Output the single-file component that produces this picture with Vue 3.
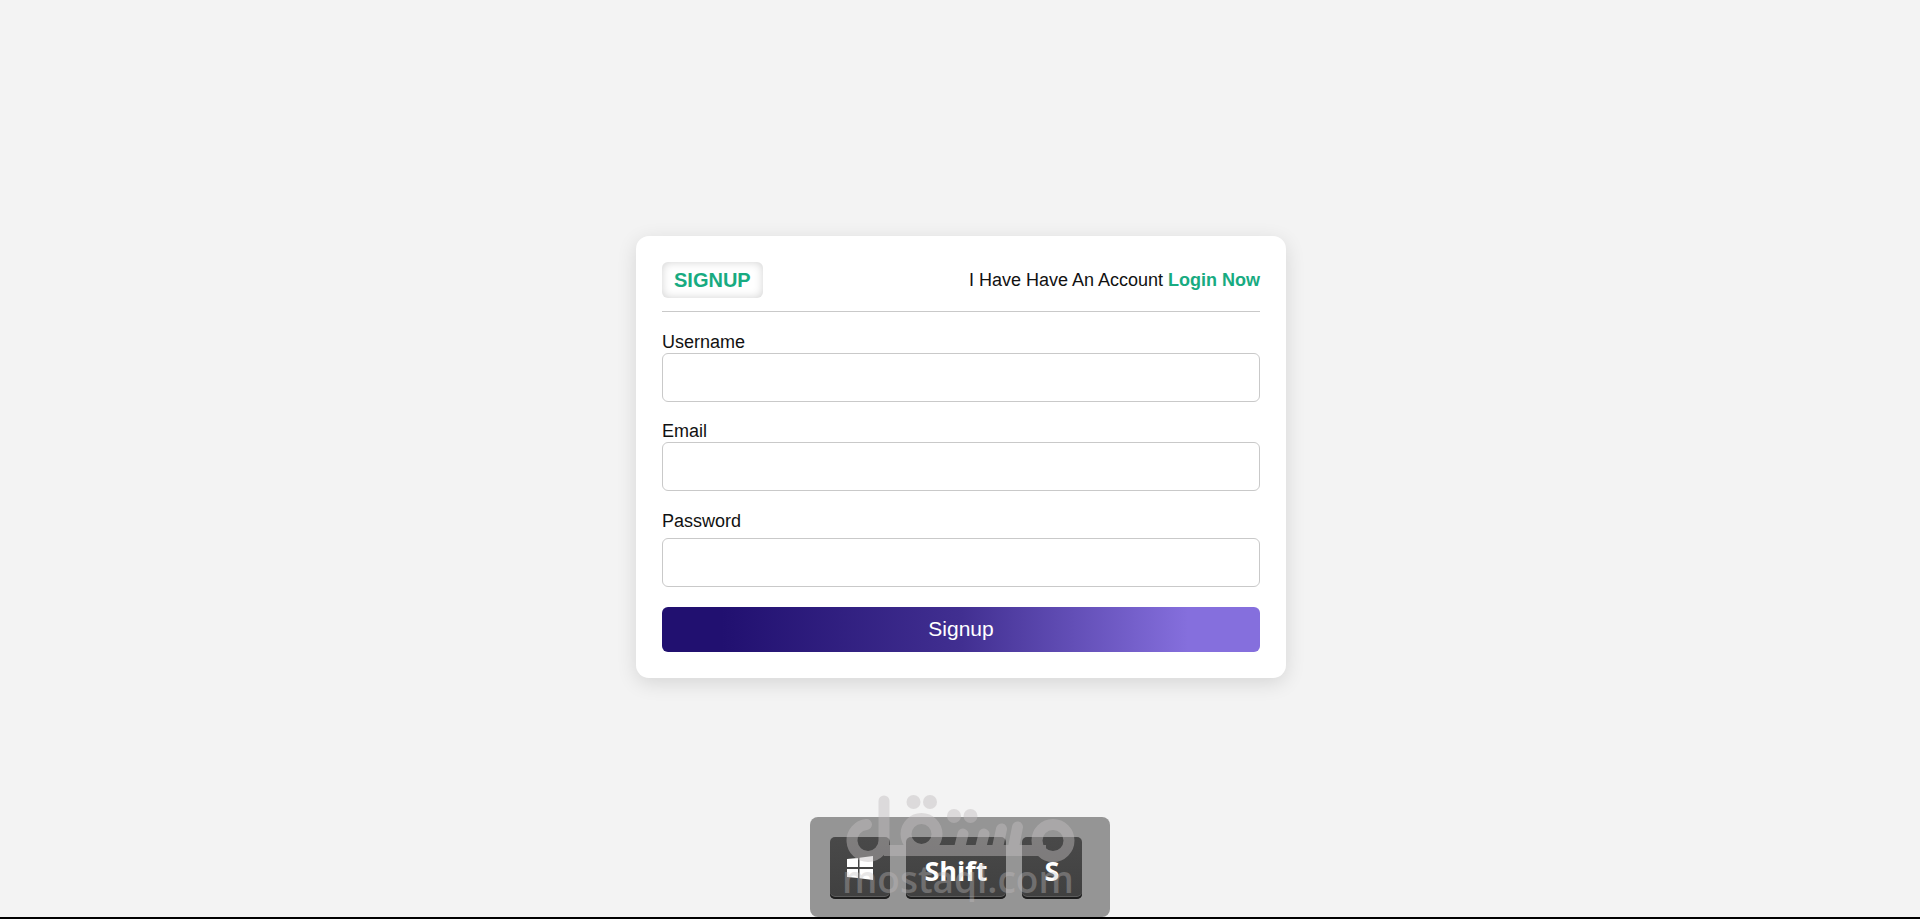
<script setup>
import { ref } from 'vue'

const username = ref('')
const email = ref('')
const password = ref('')
</script>

<template>
  <div class="page">
    <main class="stage">
      <form class="card" @submit.prevent>
        <header class="head">
          <h1 class="badge">SIGNUP</h1>
          <p class="switch">I Have Have An Account <a href="#login">Login Now</a></p>
        </header>
        <div class="field">
          <label for="username">Username</label>
          <input id="username" v-model="username" type="text" />
        </div>
        <div class="field">
          <label for="email">Email</label>
          <input id="email" v-model="email" type="email" />
        </div>
        <div class="field spaced">
          <label for="password">Password</label>
          <input id="password" v-model="password" type="password" />
        </div>
        <button class="submit" type="submit">Signup</button>
      </form>
    </main>

    <div class="overlay">
      <div class="keys">
        <kbd class="key icon">
          <svg class="win" viewBox="0 0 26 24" role="img" aria-label="Windows">
            <path fill="#fff" d="M0 3 11 2V11H0ZM12.500 1.800 26 0V11H12.500ZM0 13H11V22L0 21ZM12.500 13H26V24L12.500 22.200Z" />
          </svg>
        </kbd>
        <kbd class="key wide">Shift</kbd>
        <kbd class="key">S</kbd>
      </div>
      <div class="mark">
        <svg class="logo" viewBox="844 794 232 70" role="img" aria-label="مستقل">
          <g fill="none" stroke="#c2bebf" stroke-width="11" stroke-linecap="round" stroke-linejoin="round">
            <path d="M866.500 824.500A16 16 0 1 0 884 840.500V801" />
            <circle cx="921.500" cy="834" r="15.500" />
            <path stroke-linecap="butt" d="M884 850.500H1046" />
            <path d="M963 834 959 850M984 834 980 850M1001.500 829 997 850M1017.500 827 1013 850" />
            <circle cx="1053" cy="840.500" r="16" />
          </g>
          <g fill="#c2bebf">
            <circle cx="913.500" cy="802" r="7" />
            <circle cx="930" cy="802" r="7" />
            <circle cx="954" cy="816" r="7" />
            <circle cx="970.500" cy="816" r="7" />
          </g>
        </svg>
        <span class="domain">mostaql.com</span>
      </div>
    </div>
    <div class="edge"></div>
  </div>
</template>

<style>
body {
  margin: 0;
}
</style>

<style scoped>
.page {
  position: relative;
  min-height: 100vh;
  background: #f3f3f3;
  font-family: "Liberation Sans", Arial, sans-serif;
  color: #111;
}
.stage {
  box-sizing: border-box;
  min-height: 100vh;
  padding: 0 0 5px 2px;
  display: grid;
  place-items: center;
}
.card {
  box-sizing: border-box;
  width: 100%;
  max-width: 650px;
  padding: 26px;
  display: flex;
  flex-direction: column;
  gap: 19px;
  border-radius: 13px;
  background: #fff;
  box-shadow: 0 5px 20px rgba(0, 0, 0, 0.12);
}
.head {
  display: flex;
  align-items: center;
  justify-content: space-between;
  margin-bottom: 1px;
  padding-bottom: 13px;
  border-bottom: 1px solid #c9c9c9;
}
.badge {
  margin: 0;
  padding: 0 12px;
  border-radius: 6px;
  box-shadow: inset 0 0 10px rgba(0, 0, 0, 0.18);
  font-size: 20px;
  line-height: 36px;
  color: #18ab81;
}
.switch {
  margin: 0;
  font-size: 18px;
}
.switch a {
  font-weight: bold;
  color: #18ab81;
  text-decoration: none;
}
.field {
  display: flex;
  flex-direction: column;
  gap: 1px;
  font-size: 18px;
  line-height: 20px;
}
.spaced {
  gap: 7px;
  padding: 1px 0;
}
.field input {
  box-sizing: border-box;
  width: 100%;
  height: 49px;
  padding: 0 12px;
  border: 1px solid #c9c9c9;
  border-radius: 6px;
  background: #fff;
  font: inherit;
}
.submit {
  height: 45px;
  padding: 0 12px 2px;
  border: 0;
  border-radius: 6px;
  background: linear-gradient(90deg, #211070 10%, #412f91 50%, #856fdd 88%);
  font: 21px "Liberation Sans", Arial, sans-serif;
  color: #fff;
}
.overlay {
  position: absolute;
  bottom: 2px;
  left: 50%;
  width: 300px;
  height: 100px;
  margin-left: -150px;
  border-radius: 8px;
  background: #959595;
}
.keys {
  display: flex;
  gap: 16px;
  padding: 20px;
}
.key {
  box-sizing: border-box;
  width: 60px;
  height: 62px;
  padding-top: 4px;
  display: flex;
  align-items: center;
  justify-content: center;
  border-radius: 5px;
  background: linear-gradient(#494949, #404040);
  box-shadow: inset 0 -2px #1d1d1d, inset 0 -3px #5c5c5c;
  font: bold 27px "Open Sans", "Noto Sans", sans-serif;
  color: #fff;
}
.icon {
  padding-top: 0;
}
.wide {
  width: 100px;
}
.win {
  width: 26px;
  height: 24px;
}
.mark {
  position: absolute;
  top: -23px;
  left: 34px;
  width: 232px;
  pointer-events: none;
}
.logo {
  display: block;
  width: 232px;
  opacity: 0.45;
}
.domain {
  display: block;
  margin-left: -2px;
  font: 600 37px/30px "Open Sans", sans-serif;
  color: #c2bebf;
  opacity: 0.36;
}
.edge {
  position: absolute;
  right: 0;
  bottom: 0;
  left: 0;
  height: 2px;
  background: #000;
}
</style>
